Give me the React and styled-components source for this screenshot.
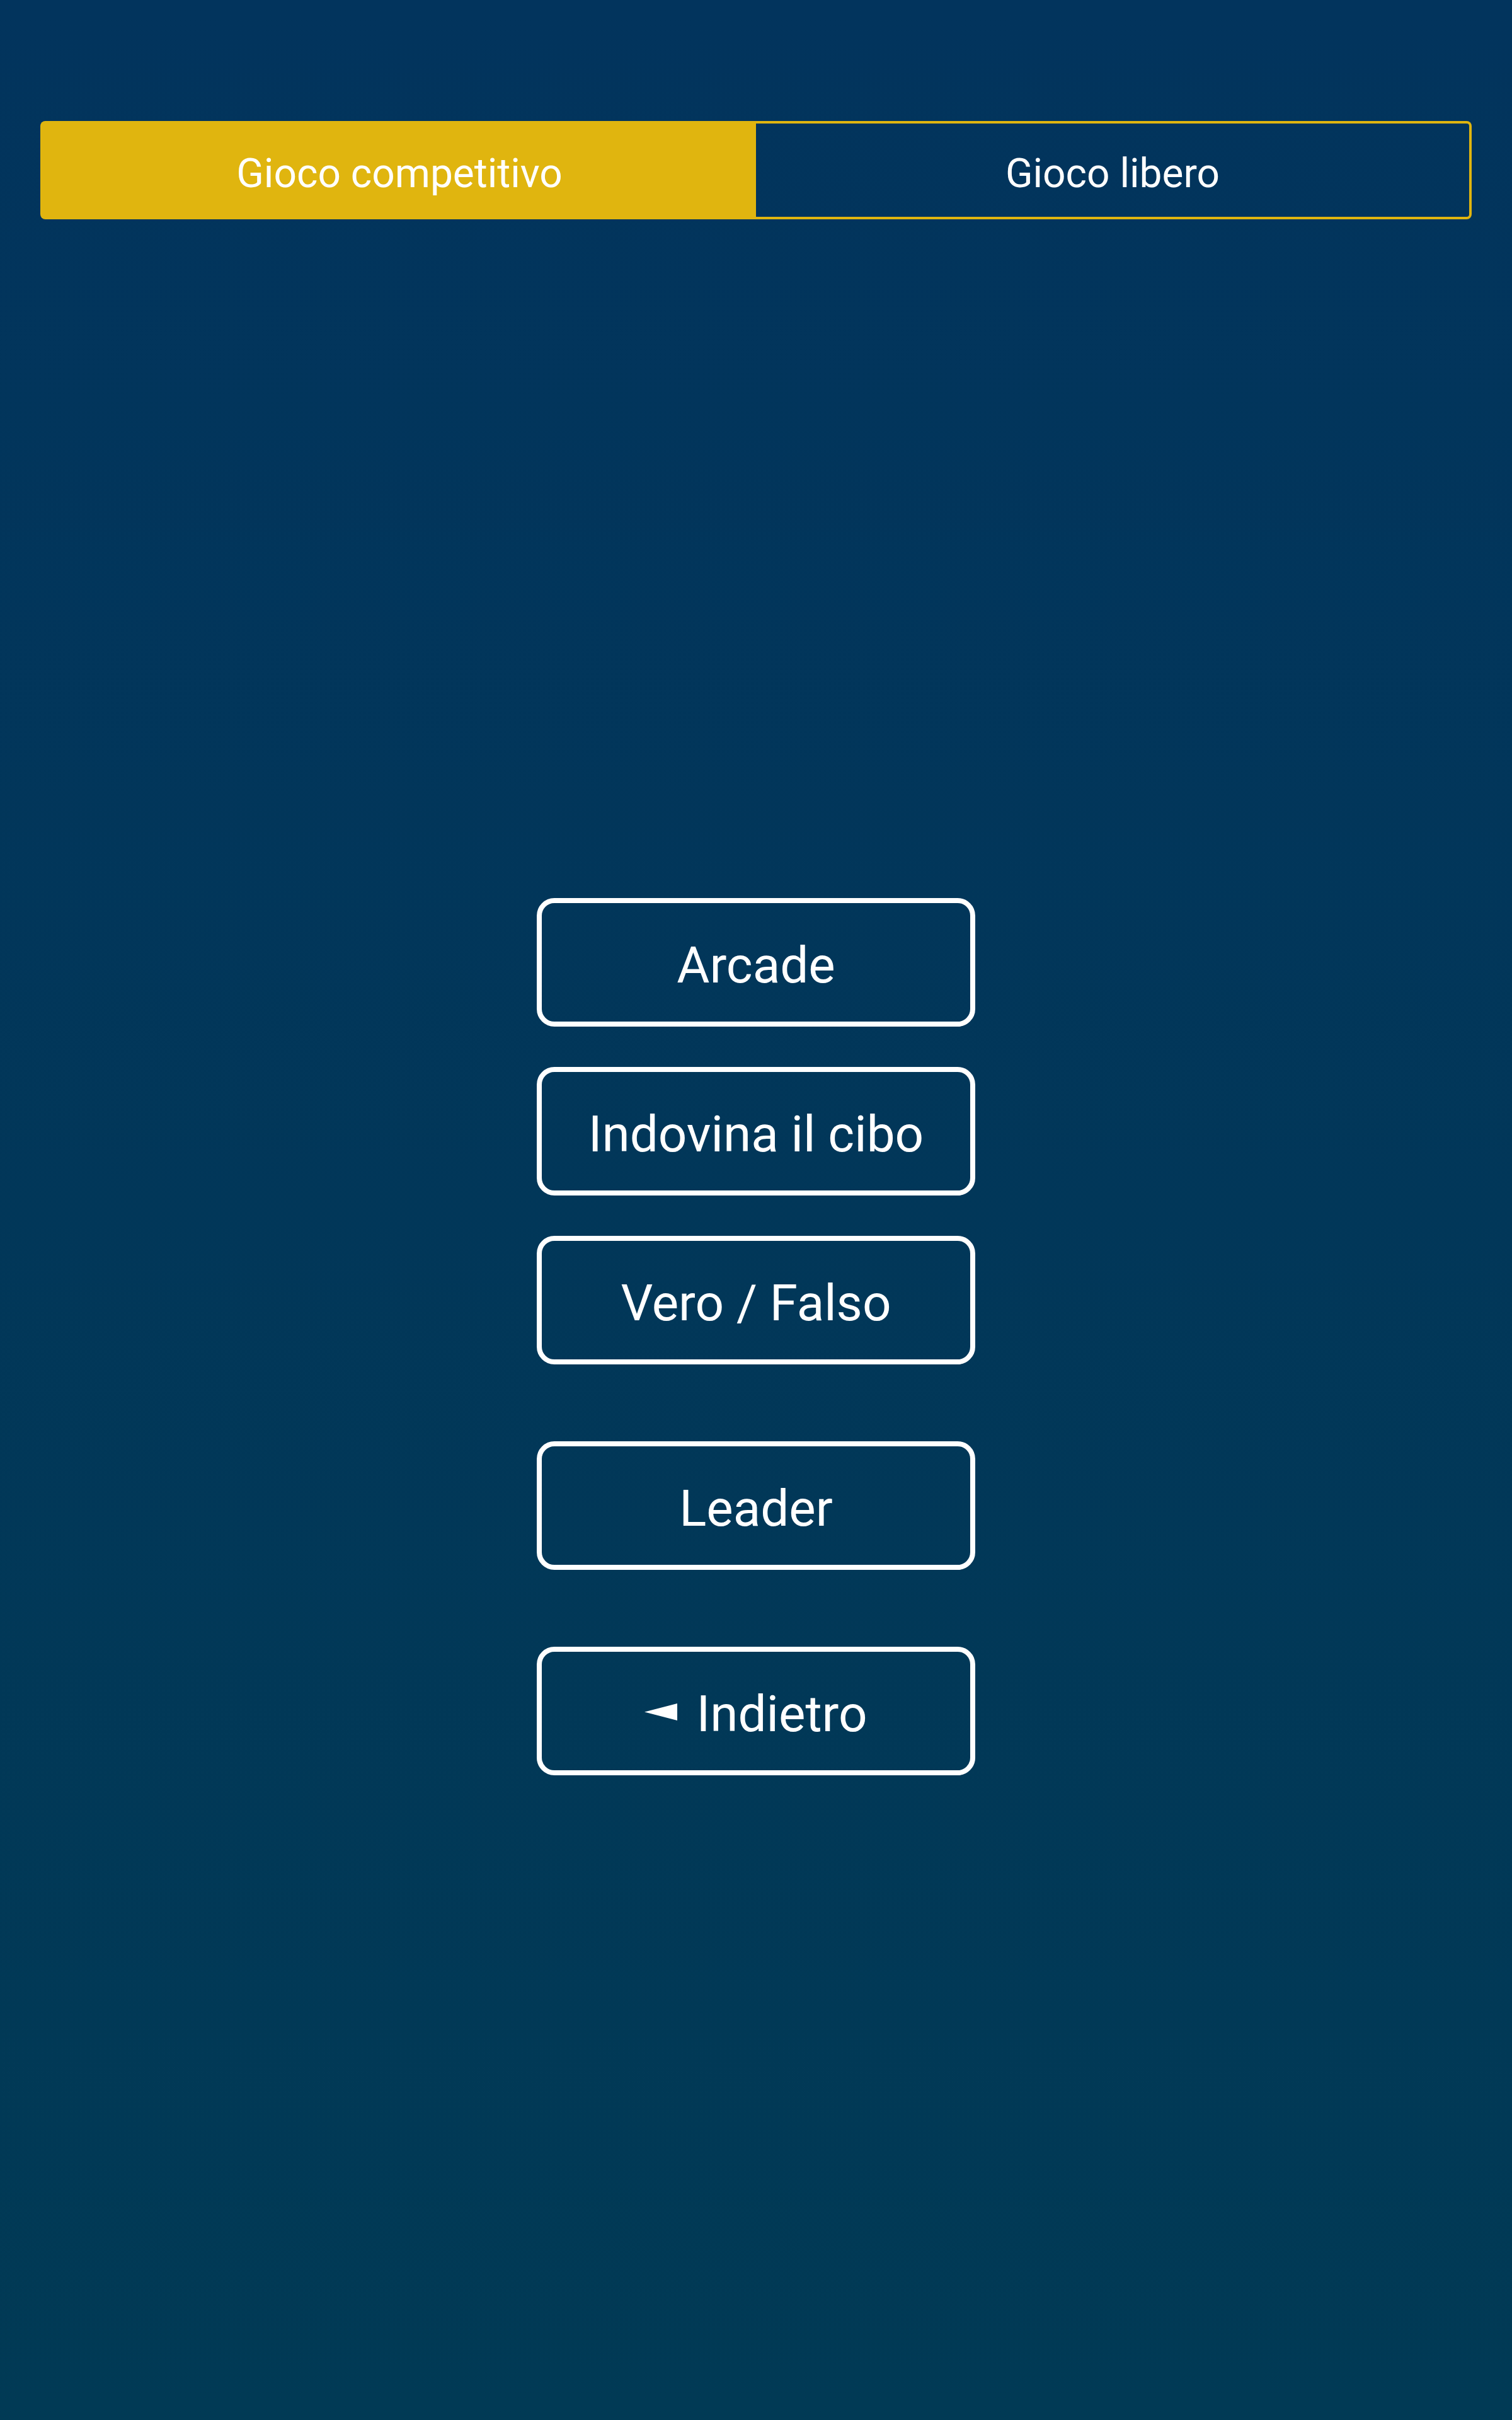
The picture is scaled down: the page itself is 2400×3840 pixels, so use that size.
import React, { useState } from "react";
import styled, { createGlobalStyle } from "styled-components";

const GlobalStyle = createGlobalStyle`
  html, body {
    margin: 0;
    padding: 0;
  }
  body {
    font-family: Roboto, "Liberation Sans", sans-serif;
    background: #013a55;
  }
`;

const Page = styled.div`
  min-height: 3840px;
  box-sizing: border-box;
  padding: 192px 64px 0;
  background: linear-gradient(180deg, #02345d 0%, #013a55 100%);
  color: #ffffff;
`;

const TabBar = styled.div`
  display: grid;
  grid-template-columns: 1fr 1fr;
  height: 156px;
`;

const Tab = styled.button`
  display: flex;
  align-items: center;
  justify-content: center;
  box-sizing: border-box;
  margin: 0;
  padding: 10px 0 0;
  font-family: Roboto, "Liberation Sans", sans-serif;
  font-size: 64px;
  color: #ffffff;
  cursor: pointer;
  border: 4px solid #e0b50f;
  background: ${(p) => (p.$active ? "#e0b50f" : "transparent")};
  border-radius: ${(p) => (p.$side === "left" ? "8px 0 0 8px" : "0 8px 8px 0")};
  ${(p) => (p.$side === "left" ? "border-right: none;" : "border-left: none;")}
`;

const Menu = styled.div`
  display: flex;
  flex-direction: column;
  align-items: center;
  padding-top: 1077px;
`;

const Group = styled.div`
  display: flex;
  flex-direction: column;
  gap: 64px;
  margin-bottom: ${(p) => p.$spacing || "0px"};
`;

const MenuButton = styled.button`
  display: flex;
  align-items: center;
  justify-content: center;
  gap: 30px;
  box-sizing: border-box;
  width: 696px;
  height: 204px;
  margin: 0;
  padding: 10px 0 0;
  border: 8px solid #ffffff;
  border-radius: 28px;
  background: transparent;
  color: #ffffff;
  font-family: Roboto, "Liberation Sans", sans-serif;
  font-size: 80px;
  cursor: pointer;
`;

const Arrow = styled.svg`
  width: 52px;
  height: 27px;
  flex: none;
  margin-bottom: 8px;
`;

function BackArrow() {
  return (
    <Arrow viewBox="0 0 52 27" aria-hidden="true">
      <polygon points="0,13.5 52,0 52,27" fill="#ffffff" />
    </Arrow>
  );
}

export default function App() {
  const [mode, setMode] = useState("competitivo");
  return (
    <>
      <GlobalStyle />
      <Page>
        <TabBar>
          <Tab
            $side="left"
            $active={mode === "competitivo"}
            onClick={() => setMode("competitivo")}
          >
            Gioco competitivo
          </Tab>
          <Tab
            $side="right"
            $active={mode === "libero"}
            onClick={() => setMode("libero")}
          >
            Gioco libero
          </Tab>
        </TabBar>
        <Menu>
          <Group $spacing="122px">
            <MenuButton>Arcade</MenuButton>
            <MenuButton>Indovina il cibo</MenuButton>
            <MenuButton>Vero / Falso</MenuButton>
          </Group>
          <Group $spacing="122px">
            <MenuButton>Leader</MenuButton>
          </Group>
          <Group>
            <MenuButton>
              <BackArrow />
              Indietro
            </MenuButton>
          </Group>
        </Menu>
      </Page>
    </>
  );
}
